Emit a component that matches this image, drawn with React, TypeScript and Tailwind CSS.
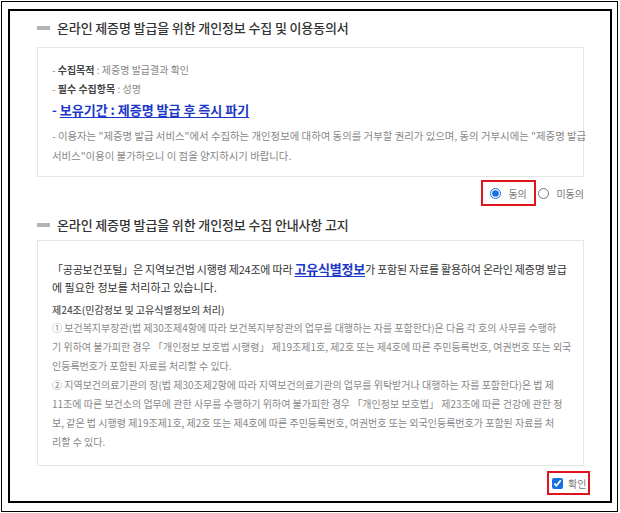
import React from 'react'

function SectionTitle({ children }: { children: React.ReactNode }) {
  return (
    <div className="flex h-[20px] items-center gap-[7px]">
      <span className="h-[4px] w-[13px] bg-[#b4b4b4]" />
      <span className="text-[13px] font-medium leading-[20px] tracking-[-0.01em] text-[#333]">{children}</span>
    </div>
  )
}

export default function App() {
  return (
    <div className="h-[513px] w-[620px] bg-white pl-[1px] pt-[1px] font-['Noto_Sans_CJK_KR','Noto_Sans',sans-serif]">
      <div className="h-[511px] w-[617px] border border-black pl-[6px] pt-[7px]">
        <div className="h-[494px] w-[604px] border-2 border-black pl-[27px] pr-[26px] pt-[7px]">
          <SectionTitle>온라인 제증명 발급을 위한 개인정보 수집 및 이용동의서</SectionTitle>

          <div className="mt-[9px] border border-[#e6e6e6] pb-[10px] pl-[14px] pt-[12px]">
            <p className="h-[19px] whitespace-nowrap text-[10px] leading-[19px] text-[#888]">
              - <b className="font-bold text-[#444]">수집목적</b> : 제증명 발급결과 확인
            </p>
            <p className="h-[19px] whitespace-nowrap text-[10px] leading-[19px] text-[#888]">
              - <b className="font-bold text-[#444]">필수 수집항목</b> : 성명
            </p>
            <p className="h-[24px] whitespace-nowrap text-[13px] font-bold leading-[24px] text-[#1a37c8]">
              - <span className="underline underline-offset-2">보유기간 : 제증명 발급 후 즉시 파기</span>
            </p>
            <div className="mt-[4px] text-[10.4px] leading-[20px] text-[#888]">
              <p className="whitespace-nowrap">
                - 이용자는 "제증명 발급 서비스"에서 수집하는 개인정보에 대하여 동의를 거부할 권리가 있으며, 동의 거부시에는 "제증명 발급
              </p>
              <p className="whitespace-nowrap">서비스"이용이 불가하오니 이 점을 양지하시기 바랍니다.</p>
            </div>
          </div>

          <div className="mt-[3px] flex justify-end">
            <label className="flex h-[26px] w-[55px] items-center gap-[7px] border-2 border-[#e0141e] pl-[7px]">
              <input type="radio" name="agree" defaultChecked className="m-0 h-[11px] w-[11px] accent-[#1a6fe0]" />
              <span className="text-[10px] text-[#777]">동의</span>
            </label>
            <label className="flex h-[26px] items-center gap-[7px] pl-[2px]">
              <input type="radio" name="agree" className="m-0 h-[11px] w-[11px]" />
              <span className="text-[10px] text-[#777]">미동의</span>
            </label>
          </div>

          <div className="mt-[9px]">
            <SectionTitle>온라인 제증명 발급을 위한 개인정보 수집 안내사항 고지</SectionTitle>
          </div>

          <div className="mt-[5px] border border-[#e6e6e6] pb-[14px] pl-[14px] pt-[19px]">
            <div className="text-[11px] leading-[18px] text-[#333]">
              <p className="whitespace-nowrap tracking-[-0.02em]">
                「공공보건포털」은 지역보건법 시행령 제24조에 따라{' '}
                <span className="text-[13px] font-bold text-[#1a37c8] underline underline-offset-2">고유식별정보</span>가
                포함된 자료를 활용하여 온라인 제증명 발급
              </p>
              <p className="whitespace-nowrap">에 필요한 정보를 처리하고 있습니다.</p>
            </div>
            <p className="mt-[5px] h-[17px] whitespace-nowrap text-[10px] font-medium leading-[17px] text-[#555]">
              제24조(민감정보 및 고유식별정보의 처리)
            </p>
            <div className="text-[10px] leading-[19px] text-[#888]">
              <p className="whitespace-nowrap">
                ① 보건복지부장관(법 제30조제4항에 따라 보건복지부장관의 업무를 대행하는 자를 포함한다)은 다음 각 호의 사무를 수행하
              </p>
              <p className="whitespace-nowrap">
                기 위하여 불가피한 경우 「개인정보 보호법 시행령」 제19조제1호, 제2호 또는 제4호에 따른 주민등록번호, 여권번호 또는 외국
              </p>
              <p className="whitespace-nowrap">인등록번호가 포함된 자료를 처리할 수 있다.</p>
              <p className="whitespace-nowrap">
                ② 지역보건의료기관의 장(법 제30조제2항에 따라 지역보건의료기관의 업무를 위탁받거나 대행하는 자를 포함한다)은 법 제
              </p>
              <p className="whitespace-nowrap">
                11조에 따른 보건소의 업무에 관한 사무를 수행하기 위하여 불가피한 경우 「개인정보 보호법」 제23조에 따른 건강에 관한 정
              </p>
              <p className="whitespace-nowrap">
                보, 같은 법 시행령 제19조제1호, 제2호 또는 제4호에 따른 주민등록번호, 여권번호 또는 외국인등록번호가 포함된 자료를 처
              </p>
              <p className="whitespace-nowrap">리할 수 있다.</p>
            </div>
          </div>

          <div className="mr-[-6px] mt-[5px] flex justify-end">
            <label className="flex h-[24px] w-[43px] items-center gap-[5px] border-2 border-[#e0141e] pl-[3px]">
              <input type="checkbox" defaultChecked className="m-0 h-[11px] w-[11px] accent-[#1a6fe0]" />
              <span className="text-[10px] text-[#777]">확인</span>
            </label>
          </div>
        </div>
      </div>
    </div>
  )
}
